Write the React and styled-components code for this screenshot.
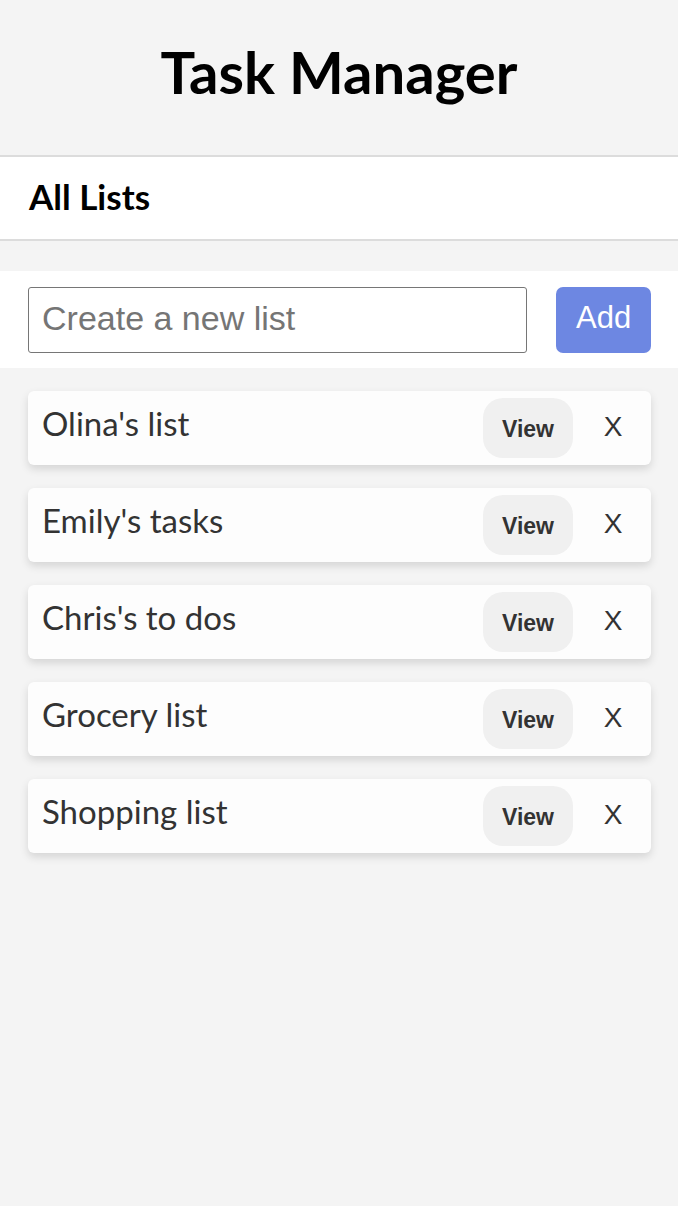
import React from "react";
import styled, { createGlobalStyle } from "styled-components";

const GlobalStyle = createGlobalStyle`
  html, body {
    margin: 0;
    padding: 0;
    background: #f4f4f4;
  }
  body {
    font-family: Lato, "Open Sans", sans-serif;
    color: #333;
  }
  * { box-sizing: border-box; }
`;

const Page = styled.div`
  min-height: 1206px;
  background: #f4f4f4;
  display: flex;
  flex-direction: column;
`;

const Header = styled.header`
  height: 157px;
  display: flex;
  align-items: center;
  justify-content: center;
  padding-bottom: 12px;
  border-bottom: 2px solid #dcdcdc;
`;

const Title = styled.h1`
  margin: 0;
  font-family: Lato, sans-serif;
  font-weight: 700;
  font-size: 58px;
  color: #000;
`;

const SubHeader = styled.div`
  height: 84px;
  background: #fff;
  border-bottom: 2px solid #dcdcdc;
  display: flex;
  align-items: center;
  padding: 0 28px 4px 29px;
`;

const SubTitle = styled.h2`
  margin: 0;
  font-family: Lato, sans-serif;
  font-weight: 700;
  font-size: 35px;
  color: #000;
`;

const Form = styled.form`
  margin-top: 30px;
  background: #fff;
  display: flex;
  align-items: center;
  gap: 29px;
  padding: 16px 27px 15px 28px;
`;

const Input = styled.input`
  width: 500px;
  height: 66px;
  border: 1px solid #767676;
  border-radius: 3px;
  padding: 0 13px 3px;
  font-family: "Liberation Sans", Arial, sans-serif;
  font-size: 34px;
  color: #333;
  background: #fff;
  &::placeholder { color: #757575; }
`;

const AddButton = styled.button`
  width: 95px;
  height: 66px;
  border: none;
  border-radius: 7px;
  background: #6d87e2;
  color: #fff;
  font-family: "Liberation Sans", Arial, sans-serif;
  font-size: 31px;
  padding: 0 0 4px;
`;

const List = styled.ul`
  list-style: none;
  margin: 0;
  padding: 23px 27px 0 28px;
  display: flex;
  flex-direction: column;
  gap: 23px;
`;

const Card = styled.li`
  height: 74px;
  background: #fdfdfd;
  border-radius: 6px;
  box-shadow: 0 4px 9px rgba(0, 0, 0, 0.13);
  display: flex;
  align-items: center;
  padding: 0 10px 0 14px;
`;

const Name = styled.span`
  flex: 1;
  font-family: Lato, sans-serif;
  font-size: 33px;
  color: #333;
  padding-bottom: 10px;
`;

const ViewButton = styled.button`
  width: 90px;
  height: 60px;
  border: none;
  border-radius: 20px;
  background: #f0f0f0;
  color: #333;
  font-family: "Liberation Sans", Arial, sans-serif;
  font-weight: 700;
  font-size: 23px;
  padding: 2px 0 0;
`;

const DeleteButton = styled.button`
  width: 56px;
  height: 60px;
  margin-left: 12px;
  border: none;
  background: transparent;
  color: #333;
  font-family: "Liberation Sans", Arial, sans-serif;
  font-size: 28px;
  padding: 0 0 2px;
`;

const lists = [
  "Olina's list",
  "Emily's tasks",
  "Chris's to dos",
  "Grocery list",
  "Shopping list",
];

export default function App() {
  return (
    <Page>
      <GlobalStyle />
      <Header>
        <Title>Task Manager</Title>
      </Header>
      <SubHeader>
        <SubTitle>All Lists</SubTitle>
      </SubHeader>
      <Form onSubmit={(e) => e.preventDefault()}>
        <Input placeholder="Create a new list" />
        <AddButton type="submit">Add</AddButton>
      </Form>
      <List>
        {lists.map((name) => (
          <Card key={name}>
            <Name>{name}</Name>
            <ViewButton type="button">View</ViewButton>
            <DeleteButton type="button">X</DeleteButton>
          </Card>
        ))}
      </List>
    </Page>
  );
}
